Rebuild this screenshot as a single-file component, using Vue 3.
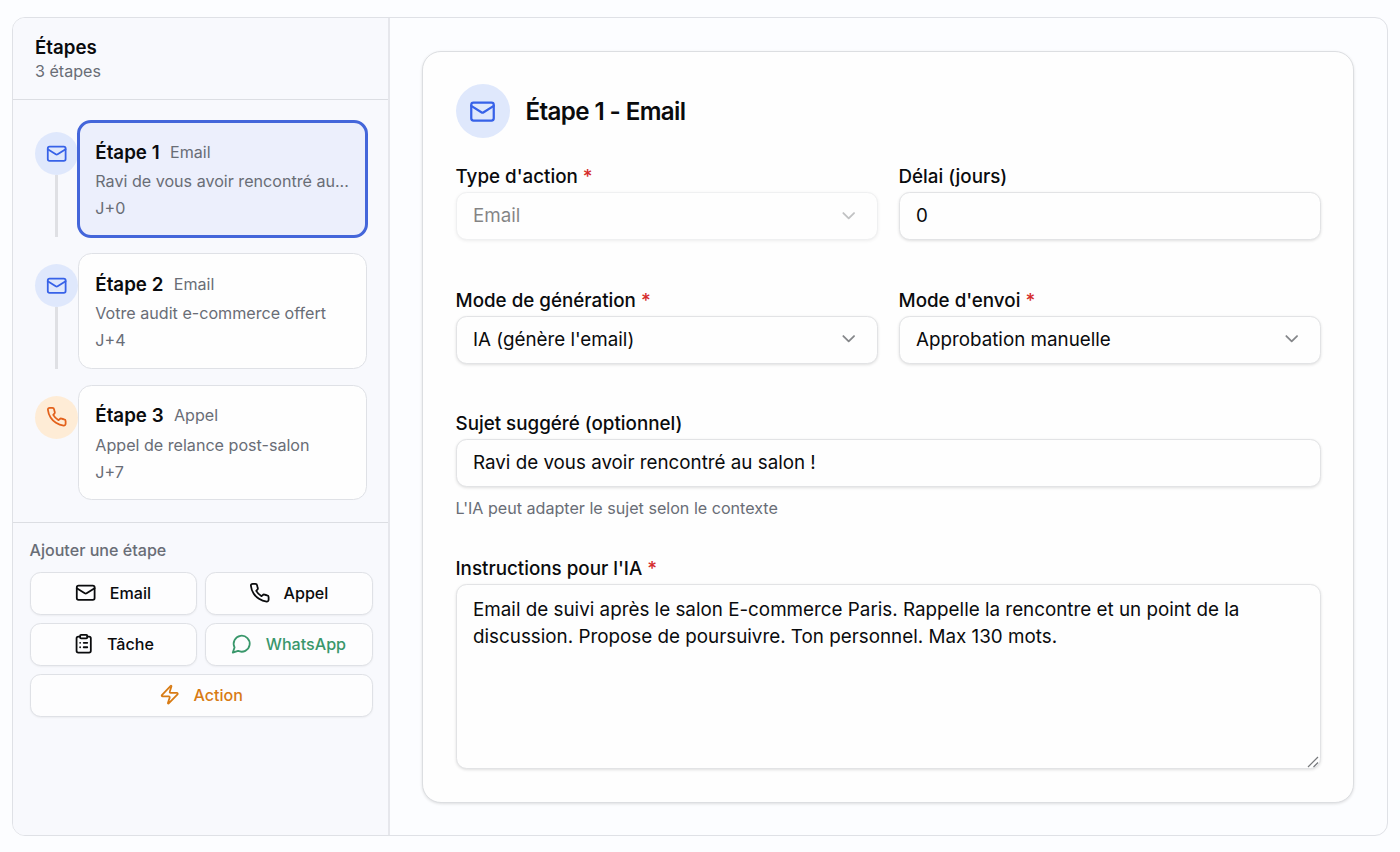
<script setup>
import { ref, h } from 'vue'

const shapes = {
  mail: [
    ['rect', { x: 2, y: 4, width: 20, height: 16, rx: 2 }],
    ['path', { d: 'm22 7-8.97 5.7a1.94 1.94 0 0 1-2.06 0L2 7' }]
  ],
  phone: [
    ['path', { d: 'M22 16.92v3a2 2 0 0 1-2.18 2 19.79 19.79 0 0 1-8.63-3.07 19.5 19.5 0 0 1-6-6 19.79 19.79 0 0 1-3.07-8.67A2 2 0 0 1 4.11 2h3a2 2 0 0 1 2 1.72 12.84 12.84 0 0 0 .7 2.81 2 2 0 0 1-.45 2.11L8.09 9.91a16 16 0 0 0 6 6l1.27-1.27a2 2 0 0 1 2.11-.45 12.84 12.84 0 0 0 2.81.7A2 2 0 0 1 22 16.92z' }]
  ],
  clipboard: [
    ['rect', { x: 8, y: 2, width: 8, height: 4, rx: 1 }],
    ['path', { d: 'M16 4h2a2 2 0 0 1 2 2v14a2 2 0 0 1-2 2H6a2 2 0 0 1-2-2V6a2 2 0 0 1 2-2h2' }],
    ['path', { d: 'M12 11h4M12 16h4M8 11h.01M8 16h.01' }]
  ],
  message: [['path', { d: 'M7.9 20A9 9 0 1 0 4 16.1L2 22Z' }]],
  zap: [
    ['path', { d: 'M4 14a1 1 0 0 1-.78-1.63l9.9-10.2a.5.5 0 0 1 .86.46l-1.92 6.02A1 1 0 0 0 13 10h7a1 1 0 0 1 .78 1.63l-9.9 10.2a.5.5 0 0 1-.86-.46l1.92-6.02A1 1 0 0 0 11 14z' }]
  ],
  chevron: [['path', { d: 'm6 9 6 6 6-6' }]]
}

const Icon = (props) =>
  h(
    'svg',
    {
      viewBox: '0 0 24 24',
      fill: 'none',
      stroke: 'currentColor',
      'stroke-width': 2,
      'stroke-linecap': 'round',
      'stroke-linejoin': 'round'
    },
    shapes[props.name].map(([tag, attrs]) => h(tag, attrs))
  )
Icon.props = ['name']

const active = ref(1)
const steps = [
  { id: 1, type: 'Email', icon: 'mail', text: 'Ravi de vous avoir rencontré au...', delay: 'J+0' },
  { id: 2, type: 'Email', icon: 'mail', text: 'Votre audit e-commerce offert', delay: 'J+4' },
  { id: 3, type: 'Appel', icon: 'phone', text: 'Appel de relance post-salon', delay: 'J+7' }
]
const actions = [
  { label: 'Email', icon: 'mail', tone: 'plain' },
  { label: 'Appel', icon: 'phone', tone: 'plain' },
  { label: 'Tâche', icon: 'clipboard', tone: 'plain' },
  { label: 'WhatsApp', icon: 'message', tone: 'green' },
  { label: 'Action', icon: 'zap', tone: 'amber wide' }
]
const days = ref('0')
const subject = ref('Ravi de vous avoir rencontré au salon !')
const instructions = ref(
  'Email de suivi après le salon E-commerce Paris. Rappelle la rencontre et un point de la discussion. Propose de poursuivre. Ton personnel. Max 130 mots.'
)
</script>

<template>
  <div class="page">
    <div class="frame">
      <aside class="sidebar">
        <header class="side-head">
          <h3>Étapes</h3>
          <p>3 étapes</p>
        </header>

        <div class="steps">
          <div v-for="(s, i) in steps" :key="s.id" class="step">
            <div class="rail">
              <span class="dot" :class="s.icon"><Icon :name="s.icon" class="ico" /></span>
              <span v-if="i < steps.length - 1" class="line"></span>
            </div>
            <div class="step-card" :class="{ active: active === s.id }" @click="active = s.id">
              <div class="step-top"><strong>Étape {{ s.id }}</strong><span>{{ s.type }}</span></div>
              <p class="step-text">{{ s.text }}</p>
              <p class="step-delay">{{ s.delay }}</p>
            </div>
          </div>
        </div>

        <div class="add">
          <p>Ajouter une étape</p>
          <div class="add-grid">
            <button v-for="a in actions" :key="a.label" :class="a.tone">
              <Icon :name="a.icon" class="ico" />{{ a.label }}
            </button>
          </div>
        </div>
      </aside>

      <main class="content">
        <section class="card">
          <div class="title">
            <span class="badge"><Icon name="mail" class="ico-lg" /></span>
            <h2>Étape 1 - Email</h2>
          </div>

          <div class="row">
            <div class="field">
              <label>Type d'action <em>*</em></label>
              <div class="control disabled"><span>Email</span><Icon name="chevron" class="chev" /></div>
            </div>
            <div class="field">
              <label>Délai (jours)</label>
              <input v-model="days" class="control" />
            </div>
          </div>

          <div class="row">
            <div class="field">
              <label>Mode de génération <em>*</em></label>
              <div class="control"><span>IA (génère l'email)</span><Icon name="chevron" class="chev" /></div>
            </div>
            <div class="field">
              <label>Mode d'envoi <em>*</em></label>
              <div class="control"><span>Approbation manuelle</span><Icon name="chevron" class="chev" /></div>
            </div>
          </div>

          <div class="field subject">
            <label>Sujet suggéré (optionnel)</label>
            <input v-model="subject" class="control" />
            <p class="hint">L'IA peut adapter le sujet selon le contexte</p>
          </div>

          <div class="field">
            <label>Instructions pour l'IA <em>*</em></label>
            <div class="area">
              <textarea v-model="instructions"></textarea>
              <svg class="grip" viewBox="0 0 12 12" fill="none" stroke="#77797c" stroke-width="1.2">
                <path d="M1 11 11 1M6.5 11 11 6.5" />
              </svg>
            </div>
          </div>
        </section>
      </main>
    </div>
  </div>
</template>

<style>
body {
  margin: 0;
  background: #fcfdff;
}
</style>

<style scoped>
* {
  box-sizing: border-box;
}
h2, h3, p {
  margin: 0;
  font-weight: 400;
}
.page {
  height: 852px;
  padding: 17px 12px 16px 12px;
  font-family: Inter, "Liberation Sans", sans-serif;
  color: #0a0b0d;
}
.frame {
  display: flex;
  width: 1375.5px;
  height: 819px;
  border: 1px solid #dfe1e6;
  border-radius: 13px;
  overflow: hidden;
}
.sidebar {
  width: 377px;
  flex: none;
  background: #f8f9fd;
  border-right: 2px solid #e6e7ec;
}
.side-head {
  height: 82px;
  padding: 16px 22px 0;
  border-bottom: 1px solid #dcdee3;
}
.side-head h3 {
  font-size: 18.7px;
  line-height: 27px;
  font-weight: 600;
}
.side-head p {
  font-size: 16.1px;
  line-height: 21px;
  color: #696d76;
}
.steps {
  height: 423px;
  padding: 21px 20px 0 22px;
  border-bottom: 1px solid #dcdee3;
}
.step {
  display: flex;
  height: 117px;
  margin-bottom: 14.7px;
}
.rail {
  width: 43px;
  display: flex;
  flex-direction: column;
  align-items: center;
  padding: 11.3px 0 1px;
}
.dot {
  width: 43px;
  height: 43px;
  flex: none;
  border-radius: 50%;
  display: flex;
  align-items: center;
  justify-content: center;
}
.dot.mail, .badge {
  background: #dfe8fc;
  color: #3762e8;
}
.dot.phone {
  background: #feecd6;
  color: #e3611b;
}
.line {
  width: 3px;
  flex: 1;
  background: #dfe0e4;
}
.ico {
  width: 21.4px;
  height: 21.4px;
  flex: none;
}
.step-card {
  position: relative;
  width: 288.5px;
  height: 115.5px;
  margin-top: 0.6px;
  padding: 16.4px 16px 0 16.3px;
  border: 1px solid #dfe1e6;
  border-radius: 13.4px;
  background: #fefefe;
}
.step-card.active {
  width: 291px;
  height: 118px;
  margin: -0.8px -1px 0 -1px;
  padding: 15.8px 10px 0 15.3px;
  border: 3px solid #4466da;
  border-radius: 14px;
  background: #eceffc;
}
.step-top {
  display: flex;
  align-items: center;
  gap: 10.4px;
  height: 27px;
}
.step-top strong {
  font-size: 18.75px;
  font-weight: 600;
}
.step-top span {
  margin-top: -1px;
  font-size: 16.1px;
  color: #696d76;
}
.step-text {
  margin-top: 4.4px;
  font-size: 16.12px;
  line-height: 22px;
  color: #696d76;
  white-space: nowrap;
}
.step-delay {
  margin-top: 4.8px;
  font-size: 16.1px;
  line-height: 22px;
  color: #696d76;
}
.add {
  padding: 16px 15.5px 0 16.5px;
}
.add p {
  font-size: 16.1px;
  line-height: 22px;
  font-weight: 500;
  color: #696d76;
  margin-bottom: 11px;
}
.add-grid {
  display: grid;
  grid-template-columns: 1fr 1fr;
  gap: 8px;
}
.add-grid button {
  height: 43px;
  display: flex;
  align-items: center;
  justify-content: center;
  gap: 13px;
  padding: 0 0 1px;
  border: 1px solid #dfe1e6;
  border-radius: 10.7px;
  background: #fdfdfe;
  box-shadow: 0 1px 2px rgba(0, 0, 0, 0.05);
  font: 500 16.1px Inter, sans-serif;
  color: #0a0b0d;
}
.add-grid .green {
  color: #39976b;
}
.add-grid .amber {
  color: #d87b14;
}
.add-grid .wide {
  grid-column: 1 / -1;
}
.content {
  flex: 1;
  padding: 33px 33px 32px 32px;
}
.card {
  height: 752px;
  padding: 32px 32px 32px 32.5px;
  border: 1px solid #dcdee1;
  border-radius: 19px;
  background: #fefefe;
  box-shadow: 0 1px 3px rgba(0, 0, 0, 0.12);
}
.title {
  display: flex;
  align-items: center;
  gap: 16px;
  margin-bottom: 27px;
}
.badge {
  width: 54px;
  height: 54px;
  border-radius: 50%;
  display: flex;
  align-items: center;
  justify-content: center;
}
.ico-lg {
  width: 27px;
  height: 27px;
}
.title h2 {
  padding-top: 1px;
  font-size: 24.15px;
  line-height: 32px;
  font-weight: 600;
  letter-spacing: -0.6px;
}
.row {
  display: grid;
  grid-template-columns: 1fr 1fr;
  gap: 21px;
  height: 123.7px;
}
.field label {
  display: block;
  height: 27px;
  line-height: 23px;
  font-size: 18.8px;
  font-weight: 500;
}
.field em {
  font-style: normal;
  color: #d52c2c;
}
.control {
  width: 100%;
  height: 48px;
  display: flex;
  align-items: center;
  justify-content: space-between;
  padding: 0 17px 1px 16.5px;
  border: 1px solid #e2e3e5;
  border-radius: 10.7px;
  outline: none;
  background: #fefefe;
  box-shadow: 0 1px 3px rgba(0, 0, 0, 0.12);
  font: 400 18.8px Inter, sans-serif;
  color: #0a0b0d;
}
.control.disabled {
  opacity: 0.5;
}
.chev {
  width: 21.4px;
  height: 21.4px;
  color: #85878a;
}
.subject {
  height: 145px;
}
.hint {
  margin-top: 10px;
  font-size: 16.12px;
  line-height: 22px;
  color: #696d76;
}
.area {
  position: relative;
  height: 185px;
}
textarea {
  display: block;
  width: 100%;
  height: 100%;
  padding: 11.6px 16px 11px 16.5px;
  border: 1px solid #e2e3e5;
  border-radius: 10.7px;
  outline: none;
  resize: none;
  background: #fefefe;
  box-shadow: 0 1px 3px rgba(0, 0, 0, 0.12);
  font: 400 18.82px/26.8px Inter, sans-serif;
  color: #0a0b0d;
}
.grip {
  position: absolute;
  right: 2px;
  bottom: 1px;
  width: 12px;
  height: 12px;
}
</style>
